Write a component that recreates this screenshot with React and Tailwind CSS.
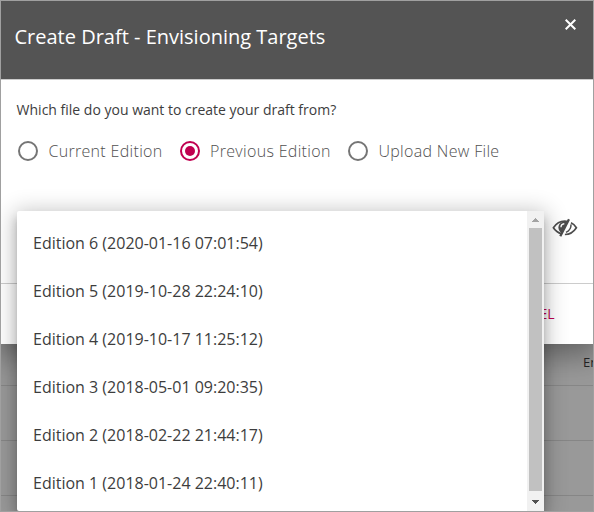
const editions = [
  'Edition 6 (2020-01-16 07:01:54)',
  'Edition 5 (2019-10-28 22:24:10)',
  'Edition 4 (2019-10-17 11:25:12)',
  'Edition 3 (2018-05-01 09:20:35)',
  'Edition 2 (2018-02-22 21:44:17)',
  'Edition 1 (2018-01-24 22:40:11)',
];

function Radio({ label, checked, className }) {
  return (
    <label className={`flex items-center ${className}`}>
      <span
        className={`flex size-5 shrink-0 items-center justify-center rounded-full border-2 ${
          checked ? 'border-[#c00050]' : 'border-[#757575]'
        }`}
      >
        {checked && <span className="size-2.5 rounded-full bg-[#c00050]" />}
      </span>
      <span className="ml-2.5 whitespace-nowrap text-base font-light leading-6 tracking-[0.32px] text-[#505050]">{label}</span>
    </label>
  );
}

function HiddenEye() {
  return (
    <svg width="26" height="20" viewBox="0 0 26 20" fill="none" stroke="#4d4d4d" strokeWidth="1.7">
      <path d="M9.6 15.9C6.2 14.9 3.2 12.6 1.4 9.8C4 5.7 8 3.1 12.7 3.1C13.8 3.1 14.8 3.2 15.7 3.5" />
      <path d="M16.2 3.4C10.4 2.4 6.4 5.3 6.4 9.4C6.4 11.8 7.7 14 9.9 15.1Z" fill="#4d4d4d" stroke="none" />
      <path d="M9 9.2C9 7.3 10.3 6 12.3 5.8" stroke="#fff" strokeWidth="1.4" />
      <path d="M17 1.2L8.3 18.2" strokeWidth="2.3" />
      <path d="M19 4.8C21.2 5.8 23 7.5 24.4 9.8C21.7 14 17.7 16.5 12.9 16.5" />
      <path d="M19 6.4C19.2 9.9 17.4 12.8 14 14.4" strokeWidth="1.5" />
    </svg>
  );
}

function EditionMenu() {
  return (
    <div className="absolute left-4 top-[210px] flex h-[300px] w-[527px] rounded-[2px] bg-white shadow-[0_5px_5px_-3px_rgba(0,0,0,0.2),0_8px_10px_1px_rgba(0,0,0,0.14),0_3px_22px_3px_rgba(0,0,0,0.24)]">
      <ul className="flex-1 pt-2">
        {editions.map((name) => (
          <li key={name} className="flex h-12 items-center px-4 text-base text-[#3d3d3d]">
            {name}
          </li>
        ))}
      </ul>
      <div className="flex w-[17px] flex-col items-center bg-[#f1f1f1]">
        <svg width="17" height="17" viewBox="0 0 17 17" shapeRendering="crispEdges">
          <path d="M5 11h7v-1h-1v-1h-1v-1h-1v-1H8v1H7v1H6v1H5z" fill="#a3a3a3" />
        </svg>
        <div className="w-[13px] flex-1 bg-[#c1c1c1]" />
        <svg className="mt-[3px]" width="17" height="17" viewBox="0 0 17 17" shapeRendering="crispEdges">
          <path d="M5 6h7v1h-1v1h-1v1h-1v1H8V9H7V8H6V7H5z" fill="#505050" />
        </svg>
      </div>
    </div>
  );
}

export default function App() {
  return (
    <div className="relative flex h-[512px] w-[594px] flex-col overflow-hidden border border-[#a0a0a0] bg-[#999] font-['Open_Sans','Noto_Sans',sans-serif]">
      <section className="h-[343px] shrink-0 bg-white shadow-[0_8px_28px_4px_rgba(0,0,0,0.36)]">
        <header className="flex h-[79px] justify-between border-b border-[#ccc] bg-[#545454] pl-[13.5px] pr-[17px] text-white">
          <h1 className="pt-[21px] text-xl leading-[30px]">Create Draft - Envisioning Targets</h1>
          <button className="mt-[18px] size-[11px]" aria-label="Close">
            <svg width="11" height="11" viewBox="0 0 11 11" stroke="currentColor" strokeWidth="2">
              <path d="M0.7 0.7L10.3 10.3M10.3 0.7L0.7 10.3" />
            </svg>
          </button>
        </header>
        <div className="h-[203px] pt-5">
          <p className="pl-[15.6px] text-sm leading-5 text-[#3d3d3d]">Which file do you want to create your draft from?</p>
          <div className="mt-[19px] flex pl-[17.4px]">
            <Radio label="Current Edition" className="w-[161.6px]" />
            <Radio label="Previous Edition" checked className="w-[168.4px]" />
            <Radio label="Upload New File" className="" />
          </div>
          <div className="mt-[55px] flex justify-end pr-[15px]">
            <HiddenEye />
          </div>
        </div>
        <footer className="flex h-[61px] items-center justify-end border-t border-[#ccc] pr-[38.5px] text-sm text-[#c00050]">
          CANCEL
        </footer>
      </section>
      <div className="flex h-[42px] shrink-0 items-center justify-end overflow-hidden border-b border-[#868686] text-[13px] text-[#222]">
        <span className="w-[10px] whitespace-nowrap pb-1">En</span>
      </div>
      <div className="h-[55px] shrink-0 border-b border-[#868686]" />
      <div className="h-[55px] shrink-0 border-b border-[#868686]" />
      <EditionMenu />
    </div>
  );
}
